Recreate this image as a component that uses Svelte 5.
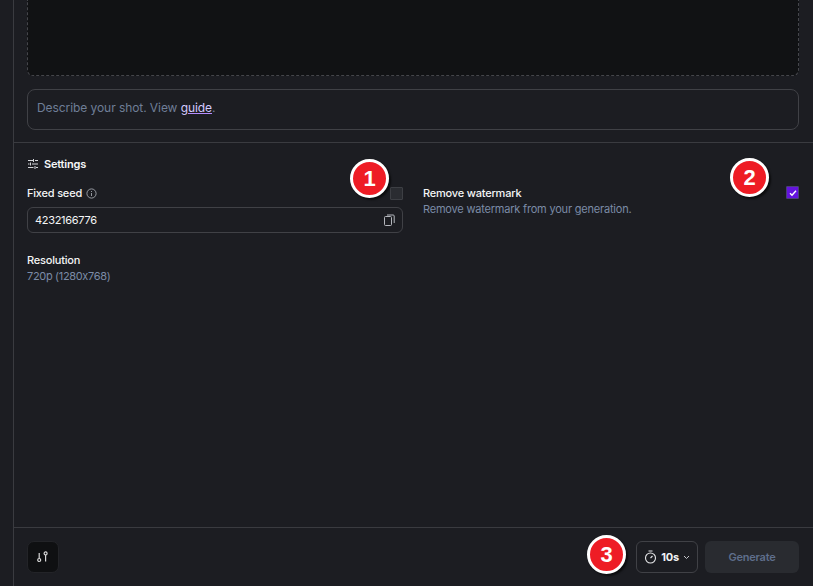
<script lang="ts">
  const seed = '4232166776';
</script>

<div class="page">
  <div class="rail"></div>
  <main class="main">
    <section class="prompt">
      <div class="dropzone"></div>
      <div class="promptbox">Describe your shot. View <a href="#guide">guide</a>.</div>
    </section>

    <section class="settings">
      <h3 class="title">
        <svg width="12" height="12" viewBox="0 0 12 12" fill="none" stroke="#d4d6da" stroke-width="1">
          <path d="M1 2.5h5M8 2.5h3M6.5 1v3M1 6h1.5M5 6h6M3.5 4.5v3M1 9.5h5.5M9 9.5h2M8 8v3" />
        </svg>
        Settings
      </h3>
      <div class="cols">
        <div class="col">
          <div class="label-row">
            <span class="label">Fixed seed</span>
            <svg class="info" width="11" height="11" viewBox="0 0 11 11" fill="none" stroke="#a3a7ae" stroke-width="0.9">
              <circle cx="5.5" cy="5.5" r="4.6" />
              <path d="M5.5 5v3M5.5 3v1" />
            </svg>
            <span class="check"></span>
          </div>
          <div class="seed">
            <span>{seed}</span>
            <svg width="11" height="12" viewBox="0 0 11 12" fill="none" stroke="#b4b7bd" stroke-width="1">
              <rect x="0.5" y="2.5" width="7" height="9" rx="1" />
              <path d="M3 1h6.2a1 1 0 0 1 1 1v7" />
            </svg>
          </div>
          <div class="res">
            <div class="label">Resolution</div>
            <div class="sub tight">720p (1280x768)</div>
          </div>
        </div>
        <div class="col">
          <div class="wm">
            <div>
              <div class="label">Remove watermark</div>
              <div class="sub">Remove watermark from your generation.</div>
            </div>
            <span class="check on">
              <svg width="8" height="8" viewBox="0 0 8 8" fill="none" stroke="#fff" stroke-width="1.4">
                <path d="M1 4.2 3 6.2 7 1.8" />
              </svg>
            </span>
          </div>
        </div>
      </div>
    </section>

    <footer class="bar">
      <button class="tool" aria-label="Tools">
        <svg width="14" height="14" viewBox="0 0 14 14" fill="none" stroke="#d8d8d8" stroke-width="1.2">
          <circle cx="3.2" cy="10" r="1.5" />
          <path d="M3.2 8.5V3" />
          <circle cx="9.6" cy="3.4" r="1.5" />
          <path d="M9.6 4.9V11.5" />
        </svg>
      </button>
      <div class="actions">
        <button class="dur">
          <svg width="13" height="14" viewBox="0 0 13 14" fill="none" stroke="#e6e7e9" stroke-width="1.1">
            <circle cx="6.5" cy="8" r="5" />
            <path d="M4.5 1h4M6.5 8l2-2" />
          </svg>
          <b>10s</b>
          <svg width="7" height="5" viewBox="0 0 7 5" fill="none" stroke="#c4c6ca" stroke-width="1">
            <path d="M1 1l2.5 2.5L6 1" />
          </svg>
        </button>
        <button class="gen" disabled>Generate</button>
      </div>
    </footer>
  </main>

  <span class="badge b1">1</span>
  <span class="badge b2">2</span>
  <span class="badge b3">3</span>
</div>

<style>
  :global(body) { margin: 0; background: #1c1d22; }
  .page {
    position: relative;
    display: flex;
    width: 813px;
    height: 586px;
    overflow: hidden;
    background: #1c1d22;
    color: #f1f2f4;
    font: 400 11px/14px Inter, "Noto Sans", sans-serif;
    font-feature-settings: "calt" 0;
    letter-spacing: -0.2px;
  }
  .rail { width: 13px; flex: none; border-right: 1px solid #3a3b40; }
  .main { flex: 1; display: flex; flex-direction: column; min-width: 0; }

  .prompt {
    padding: 0 14px 12px 13px;
    border-bottom: 1px solid #3a3b40;
    display: flex;
    flex-direction: column;
    gap: 13px;
  }
  .dropzone {
    height: 76px;
    box-sizing: border-box;
    background: #111214;
    border: 1px dashed #45464b;
    border-top: none;
    border-radius: 0 0 6px 6px;
  }
  .promptbox {
    height: 41px;
    box-sizing: border-box;
    display: flex;
    align-items: center;
    white-space: pre;
    padding: 0 9px 4px;
    border: 1px solid #404146;
    border-radius: 8px;
    font-size: 12px;
    letter-spacing: -0.07px;
    color: #6f7e97;
  }
  .promptbox a { color: #d4cbff; text-decoration: underline; text-decoration-color: #b58cff; }

  .settings { flex: 1; padding: 14px 14px 0 13px; }
  .title {
    margin: 0 0 15px;
    display: flex;
    align-items: center;
    gap: 5px;
    font-size: 11px;
    line-height: 14px;
    font-weight: 600;
    color: #f6f7f8;
  }
  .cols { display: grid; grid-template-columns: 376px 376px; gap: 20px; }
  .label-row { display: flex; align-items: center; gap: 4px; height: 14px; }
  .label { font-weight: 500; color: #f4f5f6; }
  .sub { font-size: 11px; color: #7b8ba6; margin-top: 2px; }
  .sub.tight { letter-spacing: -0.33px; }
  .check {
    width: 13px;
    height: 13px;
    box-sizing: border-box;
    margin-left: auto;
    display: flex;
    align-items: center;
    justify-content: center;
    flex: none;
    background: #2a2c31;
    border: 1px solid #3d3f44;
    border-radius: 1px;
  }
  .check.on { background: #6413de; border-color: #4b3f7a; }
  .seed {
    margin-top: 7px;
    height: 26px;
    box-sizing: border-box;
    display: flex;
    align-items: center;
    justify-content: space-between;
    padding: 0 7px;
    border: 1px solid #404146;
    border-radius: 6px;
    font-size: 11px;
    letter-spacing: -0.3px;
    color: #f4f5f6;
  }
  .res { margin-top: 20px; }
  .wm { display: flex; justify-content: space-between; align-items: flex-start; }

  .bar {
    height: 59px;
    box-sizing: border-box;
    padding: 0 14px 0 13px;
    border-top: 1px solid #3a3b40;
    display: flex;
    align-items: center;
    justify-content: space-between;
  }
  button { font: inherit; letter-spacing: inherit; padding: 0; cursor: pointer; }
  .tool {
    width: 32px;
    height: 32px;
    display: flex;
    align-items: center;
    justify-content: center;
    background: #0f1012;
    border: 1px solid #232428;
    border-radius: 7px;
  }
  .actions { display: flex; gap: 7px; }
  .dur {
    width: 62px;
    height: 32px;
    display: flex;
    align-items: center;
    justify-content: center;
    gap: 4px;
    background: transparent;
    border: 1px solid #404146;
    border-radius: 6px;
    color: #f1f2f4;
  }
  .dur b { font-weight: 700; font-size: 11px; }
  .gen {
    width: 94px;
    height: 32px;
    background: #292b30;
    border: none;
    border-radius: 6px;
    font-weight: 600;
    color: #5f6f8c;
  }

  .badge {
    position: absolute;
    width: 39px;
    height: 39px;
    display: flex;
    align-items: center;
    justify-content: center;
    box-sizing: border-box;
    border: 3px solid #fff;
    border-radius: 50%;
    background: #ee1c25;
    color: #fff;
    font: 700 22px/1 "Liberation Sans", Arial, sans-serif;
    letter-spacing: 0;
    box-shadow: 2px 2px 2px rgba(0, 0, 0, 0.6);
  }
  .b1 { left: 350px; top: 159px; }
  .b2 { left: 730px; top: 158px; }
  .b3 { left: 587px; top: 535px; }
</style>
